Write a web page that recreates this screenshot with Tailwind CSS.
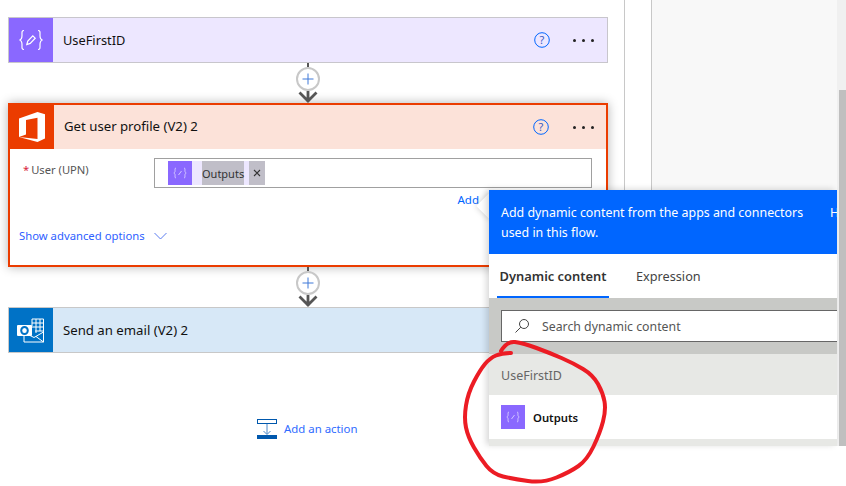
<!DOCTYPE html>
<html>
<head>
<meta charset="utf-8">
<script src="https://cdn.jsdelivr.net/npm/@tailwindcss/browser@4"></script>
</head>
<body class="bg-white">
<div class="relative w-[846px] h-[486px] overflow-hidden bg-white font-['Noto_Sans',sans-serif] text-[#111]">
  <div class="flex h-[446px]">
    <main class="w-[625px] shrink-0 border-r border-[#c8c8c8] pt-[17px] pl-[8px] overflow-hidden">
      <!-- UseFirstID -->
      <section class="flex items-center w-[600px] h-[46px] border border-[#c8c6cc] bg-[#ede7ff]">
        <div class="w-[44px] h-[44px] bg-[#8a68ff] flex items-center justify-center shrink-0">
          <svg width="26" height="22" viewBox="0 0 26 22" fill="none" stroke="#fff" stroke-width="1.2"><path d="M6 1.500C3.500 1.500 4 3.500 4 6.500 4 9.500 3.500 10.500 1.500 11 3.500 11.500 4 12.500 4 15.500 4 18.500 3.500 20.500 6 20.500"/><path d="M20 1.500C22.500 1.500 22 3.500 22 6.500 22 9.500 22.500 10.500 24.500 11 22.500 11.500 22 12.500 22 15.500 22 18.500 22.500 20.500 20 20.500"/><path d="M8.800 15.500l1-3.500 5-5.200 2.400 2.400-5 5.200z"/></svg>
        </div>
        <h2 class="ml-[10px] text-[12.800px] leading-none font-normal flex-1">UseFirstID</h2>
        <svg class="mr-[6px]" width="16" height="16" viewBox="0 0 16 16"><circle cx="8" cy="8" r="7.300" fill="none" stroke="#0066ff" stroke-width="1"/><text x="8" y="12" text-anchor="middle" font-size="11" fill="#3b5bbf" font-family="Noto Sans">?</text></svg>
        <div class="flex gap-[6px] ml-[17px] mr-[13px]"><i class="w-[3px] h-[3px] rounded-full bg-[#222]"></i><i class="w-[3px] h-[3px] rounded-full bg-[#222]"></i><i class="w-[3px] h-[3px] rounded-full bg-[#222]"></i></div>
      </section>

      <!-- connector -->
      <div class="flex flex-col items-center w-[600px] h-[40px]">
        <div class="w-[2px] h-[4px] bg-[#555]"></div>
        <div class="w-[24px] h-[24px] rounded-full border-2 border-[#c8c8c8] bg-white flex items-center justify-center">
          <svg width="12" height="12" viewBox="0 0 12 12" stroke="#3f78d8" stroke-width="1"><path d="M6 0.500V11.500M0.500 6H11.500"/></svg>
        </div>
        <svg width="20" height="12" viewBox="0 0 20 12" fill="none" stroke="#555" stroke-width="2.800"><path d="M1.500 1.500L10 10L18.500 1.500M10 0V11"/></svg>
      </div>

      <!-- Get user profile -->
      <section class="w-[600px] h-[164px] border-2 border-[#eb3c00] bg-white shadow-[0_0_10px_rgba(0,0,0,0.3)]">
        <div class="flex items-center h-[44px] bg-[#fce2d9]">
          <div class="w-[44px] h-[44px] bg-[#eb3c00] flex items-center justify-center shrink-0">
            <svg width="28" height="32" viewBox="0 0 28 32" fill="#fff"><path d="M1 7.500L19.500 1 27 3.200V27.500L19.500 31 1 26 19.500 28V6.800L8 9V23.500L1 26Z"/></svg>
          </div>
          <h2 class="ml-[10px] text-[13.200px] leading-none font-normal flex-1">Get user profile (V2) 2</h2>
          <svg class="mr-[7px]" width="16" height="16" viewBox="0 0 16 16"><circle cx="8" cy="8" r="7.300" fill="none" stroke="#0066ff" stroke-width="1"/><text x="8" y="12" text-anchor="middle" font-size="11" fill="#3b5bbf" font-family="Noto Sans">?</text></svg>
          <div class="flex gap-[6px] ml-[17px] mr-[12px]"><i class="w-[3px] h-[3px] rounded-full bg-[#222]"></i><i class="w-[3px] h-[3px] rounded-full bg-[#222]"></i><i class="w-[3px] h-[3px] rounded-full bg-[#222]"></i></div>
        </div>
        <div class="pl-[9px] pr-[14px] pt-[9px]">
          <div class="flex">
            <label class="w-[135px] pl-[4px] pt-[2px] text-[11.200px] leading-[20px] text-[#555]"><span class="text-[#d8233b] mr-[2px]">*</span>User (UPN)</label>
            <div class="flex items-center flex-1 h-[30px] border border-[#a0a0a0] pl-[13px]">
              <div class="flex items-center h-[24px] bg-[#ede7ff] pr-[5px]">
                <div class="w-[24px] h-[24px] bg-[#8a68ff] flex items-center justify-center">
                  <svg width="14" height="12" viewBox="0 0 14 12" fill="none" stroke="#d9cfff" stroke-width="0.900"><path d="M3 1C1.500 1 2.300 3 2 4.500 1.800 5.500 1.200 5.800 0.800 6 1.200 6.200 1.800 6.500 2 7.500 2.300 9 1.500 11 3 11"/><path d="M11 1C12.500 1 11.700 3 12 4.500 12.200 5.500 12.800 5.800 13.200 6 12.800 6.200 12.200 6.500 12 7.500 11.700 9 12.500 11 11 11"/><path d="M5.500 8L8.500 4"/></svg>
                </div>
                <span class="ml-[10px] bg-[#c0bec8] h-[24px] text-[11px] leading-[26px] text-[#333]">Outputs</span>
              </div>
              <span class="w-[16px] h-[24px] bg-[#c0bec8] flex items-center justify-center">
                <svg width="8" height="8" viewBox="0 0 8 8" stroke="#333" stroke-width="1.100"><path d="M1 1L7 7M7 1L1 7"/></svg>
              </span>
            </div>
          </div>
          <div class="mt-[3px] pr-[113px] text-right text-[11.500px] leading-[18px] text-[#0066ff]">Add</div>
          <div class="mt-[18px] flex items-center text-[11.300px] leading-[18px] text-[#2f5fff]">
            <span>Show advanced options</span>
            <svg class="ml-[9px]" width="13" height="8" viewBox="0 0 13 8" fill="none" stroke="#5a7cf0" stroke-width="1"><path d="M0.500 1L6.500 7L12.500 1"/></svg>
          </div>
        </div>
      </section>

      <!-- connector -->
      <div class="flex flex-col items-center w-[600px] h-[40px]">
        <div class="w-[2px] h-[4px] bg-[#555]"></div>
        <div class="w-[24px] h-[24px] rounded-full border-2 border-[#c8c8c8] bg-white flex items-center justify-center">
          <svg width="12" height="12" viewBox="0 0 12 12" stroke="#3f78d8" stroke-width="1"><path d="M6 0.500V11.500M0.500 6H11.500"/></svg>
        </div>
        <svg width="20" height="12" viewBox="0 0 20 12" fill="none" stroke="#555" stroke-width="2.800"><path d="M1.500 1.500L10 10L18.500 1.500M10 0V11"/></svg>
      </div>

      <!-- Send an email -->
      <section class="flex items-center w-[600px] h-[46px] border border-[#c8c8c8] bg-[#d7e8f7]">
        <div class="w-[44px] h-[44px] bg-[#0072c6] flex items-center justify-center shrink-0">
          <svg width="28" height="25" viewBox="0 0 28 25" fill="none"><path d="M15 1H26.500V14M15 1V8M19 1V15M23 1V13M15 5H26.500M15 9H26.500M18 13H26.500" stroke="#fff" stroke-width="1"/><path d="M7 17V24H26.500V14L17 19.500 12 17M26.500 24L19 18.500" stroke="#fff" stroke-width="1"/><rect x="0" y="7" width="15" height="11" rx="1" fill="#fff"/><ellipse cx="7.500" cy="12.500" rx="3.300" ry="3.500" fill="none" stroke="#0072c6" stroke-width="2"/></svg>
        </div>
        <h2 class="ml-[10px] pt-[2px] text-[13.200px] leading-none font-normal">Send an email (V2) 2</h2>
      </section>

      <!-- Add an action -->
      <div class="flex items-center w-[600px] mt-[65px] pl-[249px]">
        <svg width="20" height="20" viewBox="0 0 20 20" fill="none"><rect x="0.500" y="0.500" width="19" height="4" stroke="#0058ad"/><path d="M10 5V15M6.500 12L10 15.500 13.500 12" stroke="#4a88c8" stroke-width="1"/><rect x="0" y="16" width="20" height="4" fill="#0058ad"/></svg>
        <span class="ml-[7px] pt-[1px] text-[11.400px] leading-[20px] text-[#2f6bff]">Add an action</span>
      </div>
    </main>

    <div class="w-[27px] shrink-0 border-r border-[#c8c8c8] bg-white"></div>
    <aside class="flex-1 bg-[#f8f8f8]"></aside>
    <div class="w-[9px] shrink-0 bg-[#f0f0f0] flex flex-col pt-[90px] items-end">
      <div class="w-[7px] flex-1 bg-[#bfbfbf]"></div>
    </div>
  </div>

  <!-- dynamic content popup -->
  <div class="absolute left-[480px] top-[197px] w-[18px] h-[18px] rotate-45 bg-white shadow-[0_0_6px_rgba(0,0,0,0.2)]"></div>
  <div class="absolute left-[489px] top-[190px] w-[348px] h-[256px] bg-white shadow-[-3px_-1px_6px_rgba(0,0,0,0.15)] overflow-hidden flex flex-col">
    <div class="flex h-[64px] shrink-0 bg-[#0066ff] text-white text-[12.400px] leading-[20px] pl-[12px] pt-[13px] whitespace-nowrap">
      <p class="w-[329px] shrink-0">Add dynamic content from the apps and connectors<br>used in this flow.</p>
      <span>Hide</span>
    </div>
    <div class="flex h-[44px] shrink-0 pl-[8px] text-[12.700px] text-[#333]">
      <div class="w-[112px] h-[44px] border-b-2 border-[#0066ff] text-center text-[12.900px] leading-[44px] font-semibold whitespace-nowrap">Dynamic content</div>
      <div class="ml-[27px] leading-[44px] text-[#444]">Expression</div>
    </div>
    <div class="h-[56px] shrink-0 bg-[#c8c9c6] pl-[12px] pt-[12px]">
      <div class="flex items-center h-[32px] bg-white border border-r-0 border-[#666] pl-[12px] text-[12.300px] text-[#555]">
        <svg width="16" height="16" viewBox="0 0 16 16" fill="none" stroke="#444" stroke-width="1"><circle cx="10" cy="6" r="4.500"/><path d="M6.800 9.200L1.500 14.500"/></svg>
        <span class="ml-[12px] pt-[2px]">Search dynamic content</span>
      </div>
    </div>
    <div class="h-[41px] shrink-0 bg-[#e7e8e5] pl-[12px] pt-[1px] text-[12.500px] leading-[41px] text-[#666]">UseFirstID</div>
    <div class="flex items-center h-[44px] shrink-0 bg-white pl-[12px]">
      <div class="w-[24px] h-[24px] bg-[#8a68ff] flex items-center justify-center">
        <svg width="14" height="12" viewBox="0 0 14 12" fill="none" stroke="#d9cfff" stroke-width="0.900"><path d="M3 1C1.500 1 2.300 3 2 4.500 1.800 5.500 1.200 5.800 0.800 6 1.200 6.200 1.800 6.500 2 7.500 2.300 9 1.500 11 3 11"/><path d="M11 1C12.500 1 11.700 3 12 4.500 12.200 5.500 12.800 5.800 13.200 6 12.800 6.200 12.200 6.500 12 7.500 11.700 9 12.500 11 11 11"/><path d="M5.500 8L8.500 4"/></svg>
      </div>
      <span class="ml-[8px] pt-[2px] text-[11.300px] font-semibold text-[#111]">Outputs</span>
    </div>
    <div class="flex-1 bg-[#e7e8e5]"></div>
  </div>

  <!-- red hand-drawn annotation -->
  <svg class="absolute left-0 top-0 pointer-events-none" width="846" height="486" viewBox="0 0 846 486" fill="none">
    <path d="M501 351Q507 341 515 342Q523 343 536.500 348Q550 353 561.500 358Q573 363 583 369Q593 375 598 384Q603 393 604.500 401.500Q606 410 603 421.500Q600 433 593.500 446.500Q587 460 578.500 466Q570 472 556.500 477.500Q543 483 528 481Q513 479 503 476.500Q493 474 486.500 466Q480 458 474 447.500Q468 437 466 427.500Q464 418 466 405.500Q468 393 474 381.500Q480 370 485 364Q490 358 496 355.500Q502 353 511 353" stroke="#ec1c24" stroke-width="4" stroke-linecap="round" stroke-linejoin="round"/>
  </svg>
</div>
</body>
</html>
